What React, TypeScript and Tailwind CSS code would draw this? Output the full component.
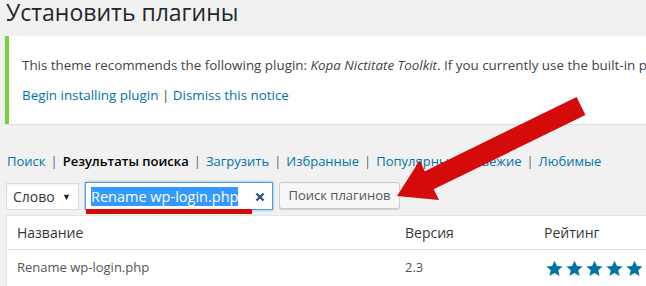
import React from "react";

function Star() {
  return (
    <svg width="17" height="17" viewBox="0 0 20 20" className="block">
      <path
        d="M10 0.8l2.8 6.2 6.8.6-5.2 4.5 1.6 6.7L10 15.3 4 18.8l1.6-6.7L.4 7.6l6.8-.6z"
        fill="#0074a2"
      />
    </svg>
  );
}

export default function App() {
  return (
    <div className="relative w-[646px] h-[286px] overflow-hidden bg-[#f1f1f1] font-['Open_Sans','Liberation_Sans',sans-serif]">
      <div className="pl-[5px]">
        <h1 className="text-[23px] leading-[24px] text-[#23282d] pl-[1px] whitespace-nowrap">
          Установить плагины
        </h1>

        <div className="mt-[12px] w-[720px] bg-white border-l-4 border-[#7ad03a] shadow-[0_1px_1px_rgba(0,0,0,0.08)] pt-[19px] pb-[19px] pl-[13px] text-[13.4px] leading-[20px] text-[#444] whitespace-nowrap">
          <p>
            This theme recommends the following plugin: <em>Kopa Nictitate Toolkit</em>. If you currently use the built-in plugin
          </p>
          <p className="mt-[10px]">
            <span className="text-[#0073aa]">Begin installing plugin</span>
            <span className="text-[#444]"> | </span>
            <span className="text-[#0073aa]">Dismiss this notice</span>
          </p>
        </div>

        <div className="mt-[27px] pl-[2px] text-[13px] leading-[20px] text-[#666] whitespace-nowrap">
          <span className="text-[#0073aa]">Поиск</span>
          <span className="px-[5px]">|</span>
          <span className="font-semibold text-[#000]">Результаты поиска</span>
          <span className="px-[5px]">|</span>
          <span className="text-[#0073aa]">Загрузить</span>
          <span className="px-[5px]">|</span>
          <span className="text-[#0073aa]">Избранные</span>
          <span className="px-[5px]">|</span>
          <span className="text-[#0073aa]">Популярные</span>
          <span className="px-[5px]">|</span>
          <span className="text-[#0073aa]">Свежие</span>
          <span className="px-[5px]">|</span>
          <span className="text-[#0073aa]">Любимые</span>
        </div>

        <div className="mt-[11px] flex items-start">
          <div className="ml-[1px] mt-[1px] w-[73px] h-[27px] border border-[#ddd] bg-white shadow-[inset_0_1px_2px_rgba(0,0,0,0.07)] flex items-center justify-between pl-[6px] pr-[7px] text-[14px] text-[#32373c]">
            <span>Слово</span>
            <span className="text-[9px] text-[#222]">▼</span>
          </div>
          <div className="relative ml-[6px] w-[188px] h-[28px] border border-[#5b9dd9] bg-white shadow-[0_0_2px_rgba(30,140,190,0.8)] flex items-center pl-[5px]">
            <span className="bg-[#3399ff] text-white text-[14.5px] leading-[19px] whitespace-nowrap">
              Rename wp-login.php
            </span>
            <svg width="10" height="10" viewBox="0 0 10 10" className="absolute left-[169px] top-[9px]">
              <path d="M1.5 1.5l7 7M8.5 1.5l-7 7" stroke="#2c5686" strokeWidth="2.4" strokeLinecap="butt" />
            </svg>
            <div className="absolute left-0 top-[26px] w-[166px] h-[5px] bg-[#d50a0a]" />
          </div>
          <div className="ml-[6px] w-[121px] h-[27px] border border-[#ccc] rounded-[3px] bg-[#f7f7f7] shadow-[0_1px_0_#ccc] flex items-center justify-center text-[13px] text-[#555] whitespace-nowrap">
            Поиск плагинов
          </div>
        </div>

        <div className="mt-[5px] ml-[1px] w-[720px] bg-white border border-[#e5e5e5]">
          <div className="flex h-[34px] items-center border-b border-[#e1e1e1] text-[14px] text-[#32373c]">
            <div className="w-[388px] pl-[10px]">Название</div>
            <div className="w-[139px] pl-[10px]">Версия</div>
            <div className="pl-[10px]">Рейтинг</div>
          </div>
          <div className="flex h-[36px] items-center text-[13px] text-[#555]">
            <div className="w-[388px] pl-[10px]">Rename wp-login.php</div>
            <div className="w-[139px] pl-[10px]">2.3</div>
            <div className="pl-[12px] flex gap-[3px]">
              <Star />
              <Star />
              <Star />
              <Star />
              <Star />
            </div>
          </div>
        </div>
      </div>

      <svg className="absolute left-0 top-0" width="646" height="286" viewBox="0 0 646 286">
        <polygon
          points="397,196 439,200 433.7,189.2 585.4,115 576.6,97 424.9,171.2 419.6,160.4"
          fill="#d50a0a"
        />
      </svg>
    </div>
  );
}
